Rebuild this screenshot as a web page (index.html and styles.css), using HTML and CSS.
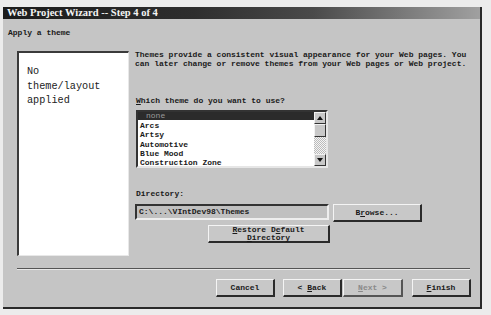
FILE: index.html
```html
<!DOCTYPE html>
<html lang="en">
<head>
  <meta charset="UTF-8" />
  <title>Web Project Wizard - Step 4 of 4</title>
  <link rel="stylesheet" href="styles.css">
</head>
<body>

  <div class="window">
    <div class="titlebar">Web Project Wizard -- Step 4 of 4</div>

    <div class="content">
      <div class="heading">Apply a theme</div>

      <div class="main">
        <div class="preview">No<br>theme/layout<br>applied</div>

        <div class="options">
          <p class="desc">Themes provide a consistent visual appearance for your Web pages. You<br>can later change or remove themes from your Web pages or Web project.</p>

          <div class="label label-theme"><u>W</u>hich theme do you want to use?</div>

          <div class="listbox">
            <ul class="items">
              <li class="selected">none</li>
              <li>Arcs</li>
              <li>Artsy</li>
              <li>Automotive</li>
              <li>Blue Mood</li>
              <li>Construction Zone</li>
            </ul>
            <div class="scrollbar">
              <div class="sb-btn">
                <svg viewBox="0 0 8 8" width="8" height="8"><polygon points="4,2 7,6 1,6" fill="#111"/></svg>
              </div>
              <div class="sb-thumb"></div>
              <div class="sb-track"></div>
              <div class="sb-btn">
                <svg viewBox="0 0 8 8" width="8" height="8"><polygon points="1,2 7,2 4,6" fill="#111"/></svg>
              </div>
            </div>
          </div>

          <div class="label label-dir">Directory:</div>

          <div class="dir-row">
            <div class="dir-input">C:\...\VIntDev98\Themes</div>
            <button class="btn btn-browse">B<u>r</u>owse...</button>
          </div>

          <button class="btn btn-restore"><u>R</u>estore D<u>e</u>fault<br><u>D</u>irectory</button>
        </div>
      </div>

      <div class="separator"></div>

      <div class="actions">
        <button class="btn">Cancel</button>
        <button class="btn btn-back">&lt; <u>B</u>ack</button>
        <button class="btn btn-next" disabled><u>N</u>ext &gt;</button>
        <button class="btn btn-finish"><u>F</u>inish</button>
      </div>
    </div>
  </div>

</body>
</html>
```

FILE: styles.css
```css
body {
  margin: 0;
  background: #ececec;
  font-family: 'Liberation Mono', monospace;
  color: #1a1a1a;
}

.window {
  margin: 7px 0 0 3px;
  width: 477px;
  height: 300px;
  background: #c5c5c5;
  border-right: 2px solid #2a2a2a;
  border-bottom: 2px solid #2a2a2a;
  display: flex;
  flex-direction: column;
}

.titlebar {
  height: 12px;
  line-height: 12px;
  padding-left: 4px;
  font-family: 'Liberation Serif', serif;
  font-weight: bold;
  font-size: 10.5px;
  color: #f4f4f4;
  background: linear-gradient(to right, #1c1c1c 0%, #2e2e2e 40%, #4a4a4a 65%, #7c7c7c 85%, #a0a0a0 100%);
}

.content {
  padding: 0 9px 0 14px;
  display: flex;
  flex-direction: column;
  flex: 1;
}

.heading {
  margin: 9px 0 13px -9px;
  font-size: 8px;
  font-weight: bold;
  line-height: 10px;
}

.main {
  display: flex;
  height: 207px;
}

.preview {
  width: 101px;
  height: 190px;
  padding: 12px 0 0 8px;
  background: #fff;
  border-top: 2px solid #3a3a3a;
  border-left: 2px solid #3a3a3a;
  border-right: 1px solid #e8e8e8;
  border-bottom: 1px solid #e8e8e8;
  font-size: 10.2px;
  line-height: 14.5px;
  color: #222;
}

.options {
  margin-left: 6px;
  display: flex;
  flex-direction: column;
  align-items: flex-start;
}

.desc {
  margin: -1px 0 0 0;
  font-size: 8px;
  font-weight: bold;
  line-height: 9px;
  white-space: nowrap;
}

.label {
  font-size: 8px;
  font-weight: bold;
  line-height: 9px;
  margin-left: 1px;
}

.label-theme {
  margin-top: 28px;
}

.listbox {
  margin-top: 5px;
  margin-left: 1px;
  width: 188px;
  height: 54px;
  display: flex;
  background: #fff;
  border-top: 2px solid #333;
  border-left: 2px solid #333;
  border-right: 2px solid #e6e6e6;
  border-bottom: 2px solid #e6e6e6;
}

.items {
  list-style: none;
  margin: 0;
  padding: 0;
  flex: 1;
  font-size: 8px;
  font-weight: bold;
  line-height: 9.3px;
}

.items li {
  padding-left: 2px;
}

.items .selected {
  background: #2b2b2b;
  color: #9a9a9a;
  font-weight: normal;
  padding-left: 8px;
  line-height: 8px;
  margin-bottom: 1px;
}

.scrollbar {
  width: 12px;
  display: flex;
  flex-direction: column;
}

.sb-btn,
.sb-thumb {
  height: 10px;
  background: #c8c8c8;
  border-top: 1px solid #f2f2f2;
  border-left: 1px solid #f2f2f2;
  border-right: 1px solid #333;
  border-bottom: 1px solid #333;
  display: flex;
  align-items: center;
  justify-content: center;
}

.sb-thumb {
  height: 11px;
}

.sb-track {
  flex: 1;
  background-color: #eee;
  background-image: repeating-conic-gradient(#bbb 0 25%, #f4f4f4 0 50%);
  background-size: 2px 2px;
}

.label-dir {
  margin-top: 21px;
}

.dir-row {
  display: flex;
  margin-top: 6px;
  gap: 4px;
}

.dir-input {
  width: 188px;
  height: 12px;
  padding-left: 2px;
  font-size: 8px;
  font-weight: bold;
  line-height: 12px;
  background: #c0c0c0;
  border-top: 2px solid #333;
  border-left: 2px solid #333;
  border-right: 2px solid #eee;
  border-bottom: 2px solid #eee;
}

.btn {
  font-family: 'Liberation Mono', monospace;
  font-size: 8px;
  font-weight: bold;
  color: #1a1a1a;
  background: #c8c8c8;
  border-top: 1px solid #f4f4f4;
  border-left: 1px solid #f4f4f4;
  border-right: 2px solid #2a2a2a;
  border-bottom: 2px solid #2a2a2a;
  padding: 0;
  height: 18px;
  line-height: 9px;
}

.btn-browse {
  width: 89px;
}

.btn-restore {
  width: 122px;
  margin: 3px 0 0 73px;
  line-height: 8px;
}

.separator {
  margin-top: 10px;
  width: 453px;
  border-top: 1px solid #555;
  border-bottom: 1px solid #e8e8e8;
}

.actions {
  margin-top: 9px;
  display: flex;
  justify-content: flex-end;
}

.actions .btn {
  width: 59px;
}

.btn-back {
  margin-left: 8px;
}

.actions .btn-next {
  width: 60px;
  margin-left: 1px;
  color: #8a8a8a;
  border-right-color: #555;
  border-bottom-color: #555;
}

.btn-finish {
  margin-left: 9px;
}
```
